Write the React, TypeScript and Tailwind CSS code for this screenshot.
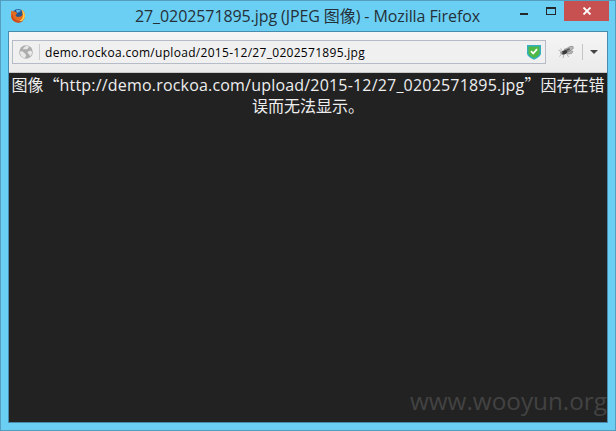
function FirefoxLogo() {
  return (
    <svg width="16" height="16" viewBox="0 0 16 16">
      <circle cx="8" cy="7" r="6" fill="#245791" />
      <path d="M6 2Q9 1 11 3L9 4 7 5Z" fill="#67b7e8" />
      <path d="M1.4 2.2 3 3.4Q4.6 2.7 5.4 3.8L7.3 5.6 5.5 7Q6.2 9.4 9 8.8Q12.5 8.5 12.4 5.5L11.5 1.4Q15.4 4 15 8.6Q14 14.2 8 14.5Q1.8 14 1 8.3Q.8 5 1.4 2.2Z" fill="#e46b20" />
      <path d="M12 1.8Q15.5 5 14.7 9.2Q13 13.4 9 13.4Q13 11 13.1 7.3Z" fill="#ffd04a" />
      <path d="M1.3 8Q2 13.8 8 14.8Q11 15 13 13Q8 14 4.8 11.2Q2.5 9 2.5 6Z" fill="#c94a1c" />
    </svg>
  );
}

function Globe() {
  return (
    <svg width="14" height="14" viewBox="0 0 14 14">
      <circle cx="7" cy="7" r="6.8" fill="#adadad" />
      <path d="M7.4.8 9.8 1.3 9.3 3.2 7.3 4.6 5.8 4 4.4 4.6 4.2 3ZM.8 6.2 3.6 6.6 6 8.5 7.2 10.4 6 13 3.6 12.4 1.6 10.2ZM9.4 6.2 11.6 5.4 13.2 7 12.7 9.6 11 11.4 10.2 9.2 8.4 8Z" fill="#e8e8e8" />
    </svg>
  );
}

function Shield() {
  return (
    <svg width="16" height="16" viewBox="0 0 16 16">
      <path d="M1 1H15V9.4Q14.6 12.8 8 15.7Q1.4 12.8 1 9.4Z" fill="#35aebf" />
      <path d="M2.5 2.5H13.5V9.2Q13 11.8 8 14Q3 11.8 2.5 9.2Z" fill="#4fb944" />
      <path d="m5 7.2 2.2 2.3 3.8-4.3" fill="none" stroke="#fff" strokeWidth="1.8" />
    </svg>
  );
}

function Fly() {
  return (
    <svg width="17" height="14" viewBox="0 0 17 14">
      <path d="M6 5 12 1.5 15 1.4 15.3 3.5 11 6.5ZM8 7.5 12.5 5.5 15 6.5 13.5 8.6 9.4 9Z" fill="#b8b8b8" stroke="#777" strokeWidth=".6" />
      <ellipse cx="6.3" cy="7.3" rx="3.2" ry="2" transform="rotate(-22 6.3 7.3)" fill="#3a3a3a" />
      <ellipse cx="10" cy="4.6" rx="2.1" ry="1" transform="rotate(-22 10 4.6)" fill="#555" />
      <path d="M3 6.2.5 5.2M4 5.5 2.6 3.5M3.5 9 1.5 11.5M6 9.5 5 13M8.5 8.8 10.7 12M7.5 5 7 3" fill="none" stroke="#999" strokeWidth=".7" />
      <circle cx="3.4" cy="7.8" r="1.2" fill="#999" />
    </svg>
  );
}

function TitleBar() {
  return (
    <header className="relative h-[30px] shrink-0">
      <div className="flex pl-[9px] pt-[7px]">
        <FirefoxLogo />
        <h1 className="ml-[109px] -mt-[3px] whitespace-nowrap text-[16px] leading-[22px] tracking-[-0.09px] text-[#25313a]">
          27_0202571895.jpg (JPEG 图像) - Mozilla Firefox
        </h1>
      </div>
      <div className="absolute right-[6px] top-0 flex h-5">
        <svg width="44" height="20" viewBox="0 0 44 20" shapeRendering="crispEdges">
          <path d="M0 12h8v2H0zM26 6h10v8H26zM27 8v5h8V8z" fill="#25282b" fillRule="evenodd" />
        </svg>
        <div className="flex h-5 w-[45px] items-center justify-center bg-[#c75050]">
          <svg width="10" height="8" viewBox="0 0 10 8">
            <path d="m1.5.5 7 7m0-7-7 7" stroke="#fff" strokeWidth="1.8" />
          </svg>
        </div>
      </div>
    </header>
  );
}

export default function App() {
  return (
    <div className="flex h-[431px] w-[616px] flex-col overflow-hidden border border-[#559dbe] bg-[#6bcff3] font-['Open_Sans','Noto_Sans_CJK_SC',sans-serif]">
      <TitleBar />
      <main className="mx-[7px] mb-[7px] flex min-h-0 flex-1 flex-col border border-[#488cad]">
        <div className="flex h-[41px] shrink-0 items-center border-b border-[#c8c8c8] bg-gradient-to-b from-[#f5f5f5] to-[#ebebeb] pl-[3px]">
          <div className="flex h-6 w-[534px] items-center border border-[#b5bcc7] bg-[#f0f0f0] pl-[6px]">
            <Globe />
            <div className="ml-[6px] h-4 w-px bg-[#c9cbce]" />
            <span className="ml-[5px] mt-[2px] w-[481px] whitespace-nowrap text-[12px] leading-5 tracking-[0.3px] text-black">
              demo.rockoa.com/upload/2015-12/27_0202571895.jpg
            </span>
            <Shield />
          </div>
          <div className="ml-3"><Fly /></div>
          <div className="ml-[7px] h-4 w-px bg-[#c5c5c5]" />
          <svg className="ml-[7px]" width="8" height="4" viewBox="0 0 8 4"><path d="M0 0h8L4 4z" fill="#444" /></svg>
        </div>
        <section className="relative flex-1 bg-[#222] pt-px text-center text-[16px] leading-[21px] text-[#eee]">
          <p className="whitespace-nowrap">
            <span className="font-['Noto_Sans_CJK_SC',sans-serif]">图像“</span>
            <span className="tracking-[0.19px]">http://demo.rockoa.com/upload/2015-12/27_0202571895.jpg</span>
            <span className="font-['Noto_Sans_CJK_SC',sans-serif]">”因存在错</span>
          </p>
          <p>误而无法显示。</p>
          <span className="absolute bottom-1 right-0 text-[24.3px] leading-[34px] text-[#424242]">www.wooyun.org</span>
        </section>
      </main>
    </div>
  );
}
